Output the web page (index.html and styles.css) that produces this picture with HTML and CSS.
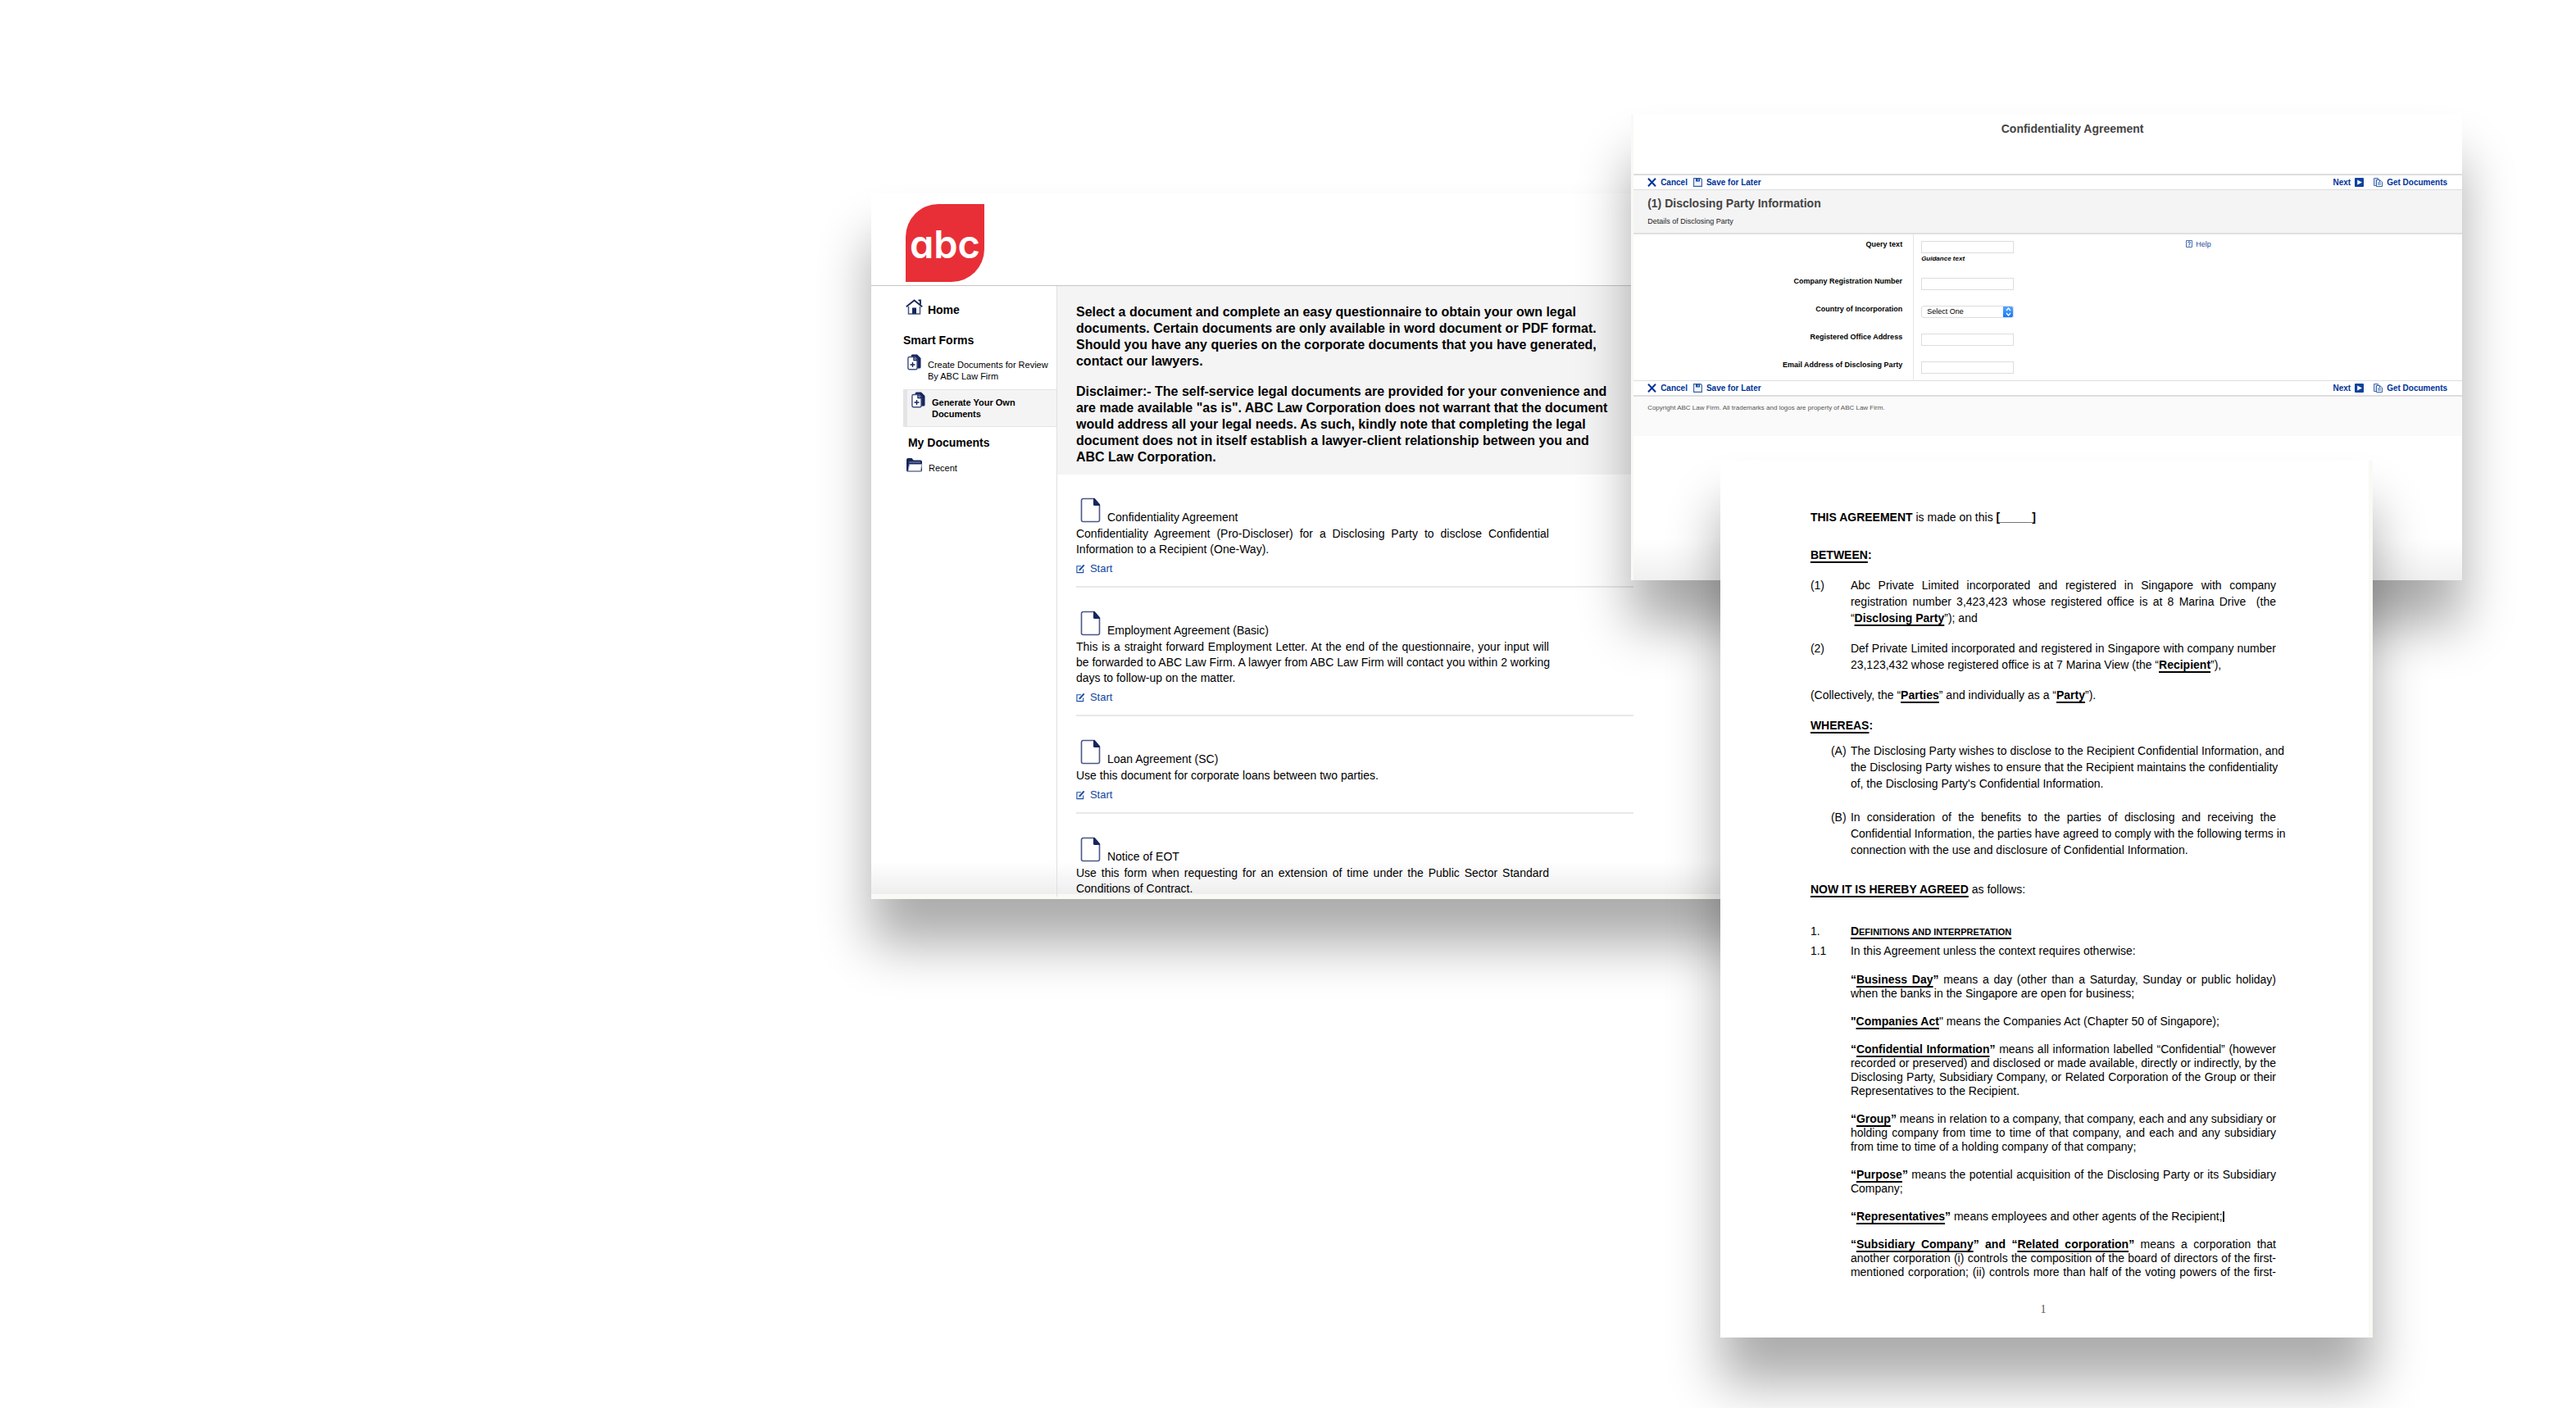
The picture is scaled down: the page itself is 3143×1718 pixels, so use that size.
FILE: index.html
```html
<!DOCTYPE html>
<html lang="en">
<head>
<meta charset="utf-8">
<title>ABC Law Firm Smart Forms</title>
<link rel="stylesheet" href="styles.css">
</head>
<body>
<svg class="defs" aria-hidden="true">
  <symbol id="i-page" viewBox="0 0 25 31"><path d="M17 1.500H3.500a2 2 0 0 0-2 2v24a2 2 0 0 0 2 2h18a2 2 0 0 0 2-2V9z" fill="#fff" stroke="#4a5688" stroke-width="1.600"/><path d="M16 1v7.500q0 1.500 1.500 1.500H24V8.500L17.500 1z" fill="#17265c"/></symbol>
  <symbol id="i-edit" viewBox="0 0 12 12"><path d="M6.500 2.500H1v8.500h8.500V6.500" fill="none" stroke="#1d4fa3" stroke-width="1.200"/><path d="M3.500 8.800 4 6.500 9.800.2l1.600 1.400-5.700 6.500z" fill="#1d4fa3"/></symbol>
  <symbol id="i-docs" viewBox="0 0 17 20"><path d="M6 .5h6L16.500 5v11q0 1.500-1.500 1.500h-3V6L9 3H4.500Q4.500.5 6 .5z" fill="#17265c"/><path d="M2.500 3.500h5.800L12 7.200V17q0 1.800-1.800 1.800H2.700Q.9 18.800.9 17V5.200q0-1.700 1.600-1.700z" fill="#fff" stroke="#3f4c80" stroke-width="1.400"/><path d="M8 3.500v4h4M6.500 10v6M3.500 13h6" fill="none" stroke="#17265c" stroke-width="1.400"/></symbol>
  <symbol id="i-x" viewBox="0 0 11 11"><path d="M1 .8 10 10.200M10 .8 1 10.200" stroke="#039" stroke-width="2"/></symbol>
  <symbol id="i-save" viewBox="0 0 11 11"><path d="M.6 .6h8.400l1.400 1.400v8.400H.6z" fill="#eef3fb" stroke="#3560a8" stroke-width="1.100"/><path d="M3 .8h5v3.700H3z" fill="#1d4a9c"/><path d="M5.500 1.500h1v2h-1z" fill="#fff"/></symbol>
  <symbol id="i-next" viewBox="0 0 11 11"><rect width="11" height="11" rx="1" fill="#0f429c"/><path d="M3.200 2.500 9 5.500 3.200 8.500z" fill="#fff"/></symbol>
  <symbol id="i-copy" viewBox="0 0 11 11"><path d="M.5.5h5v9h-5z" fill="#cfdaee" stroke="#4a70b2"/><path d="M3.500 2.500h4l3 2.500v5.500h-7z" fill="#fff" stroke="#3560a8"/><path d="M5 6h4M5 8h4M7.500 2.500V5" stroke="#3560a8"/></symbol>
  <symbol id="i-help" viewBox="0 0 8 9"><path d="M.5.500h7v8h-7z" fill="#fff" stroke="#4a70b2"/><path d="M2.500 3.300q0-1.300 1.500-1.300t1.500 1.200Q5.500 4 4 4.800v1M4 6.500v1" fill="none" stroke="#1d4a9c"/></symbol>
</svg>

<main class="stage">

  <section class="window portal">
    <header class="portal-head">
      <div class="logo">abc</div>
    </header>
    <div class="portal-body">
      <nav class="side">
        <a class="home" href="#home">
          <svg width="21" height="19" viewBox="0 0 21 19"><path d="M3.500 9v9h14V9" fill="#fff" stroke="#4a5688" stroke-width="1.500"/><path d="M.8 9.300 10.500 1.500 20.200 9.300M15.500 1.500h2.500v5" fill="none" stroke="#17265c" stroke-width="1.800"/><path d="M8 10.500h5V18H8z" fill="#17265c"/></svg>
          Home</a>
        <h2 class="side-title">Smart Forms</h2>
        <a class="side-link" href="#create"><svg width="17" height="20"><use href="#i-docs"/></svg><span>Create Documents for Review<br>By ABC Law Firm</span></a>
        <a class="side-link current" href="#generate" aria-current="page"><svg width="17" height="20"><use href="#i-docs"/></svg><span>Generate Your Own<br>Documents</span></a>
        <h2 class="side-title inset">My Documents</h2>
        <a class="side-link recent" href="#recent">
          <svg width="20" height="17" viewBox="0 0 20 17"><path d="M0 15V2Q0 0 2 0h4.500l2 2.500H17q2 0 2 2V15q0 1.500-2 1.500H2Q0 16.500 0 15z" fill="#17265c"/><path d="M3.500 7.500h15.200L17.500 15.500H2z" fill="#fff" stroke="#8f98b8"/><path d="M3 5h14" stroke="#8f98b8"/></svg>
          <span>Recent</span></a>
      </nav>
      <div class="content">
        <div class="notice">
          <p>Select a document and complete an easy questionnaire to obtain your own legal documents. Certain documents are only available in word document or PDF format. Should you have any queries on the corporate documents that you have generated, contact our lawyers.</p>
          <p>Disclaimer:- The self-service legal documents are provided for your convenience and are made available "as is". ABC Law Corporation does not warrant that the document would address all your legal needs. As such, kindly note that completing the legal document does not in itself establish a lawyer-client relationship between you and ABC Law Corporation.</p>
        </div>
        <article class="item">
          <h3><svg width="25" height="31"><use href="#i-page"/></svg>Confidentiality Agreement</h3>
          <p>Confidentiality Agreement (Pro-Discloser) for a Disclosing Party to disclose Confidential Information to a Recipient (One-Way).</p>
          <a href="#start-ca"><svg width="11" height="12"><use href="#i-edit"/></svg>Start</a>
        </article>
        <article class="item">
          <h3><svg width="25" height="31"><use href="#i-page"/></svg>Employment Agreement (Basic)</h3>
          <p><span class="line">This is a straight forward Employment Letter. At the end of the questionnaire, your input will</span> <span class="line">be forwarded to ABC Law Firm. A lawyer from ABC Law Firm will contact you within 2 working</span> days to follow-up on the matter.</p>
          <a href="#start-ea"><svg width="11" height="12"><use href="#i-edit"/></svg>Start</a>
        </article>
        <article class="item">
          <h3><svg width="25" height="31"><use href="#i-page"/></svg>Loan Agreement (SC)</h3>
          <p>Use this document for corporate loans between two parties.</p>
          <a href="#start-la"><svg width="11" height="12"><use href="#i-edit"/></svg>Start</a>
        </article>
        <article class="item last">
          <h3><svg width="25" height="31"><use href="#i-page"/></svg>Notice of EOT</h3>
          <p>Use this form when requesting for an extension of time under the Public Sector Standard Conditions of Contract.</p>
        </article>
      </div>
    </div>
  </section>

  <section class="window form-window">
    <h1 class="form-name">Confidentiality Agreement</h1>
    <div class="bar bar-top">
      <button type="button"><svg width="11" height="11"><use href="#i-x"/></svg>Cancel</button>
      <button type="button"><svg width="11" height="11"><use href="#i-save"/></svg>Save for Later</button>
      <button type="button" class="next">Next<svg width="11" height="11"><use href="#i-next"/></svg></button>
      <button type="button"><svg width="11" height="11"><use href="#i-copy"/></svg>Get Documents</button>
    </div>
    <div class="form-head">
      <h2>(1) Disclosing Party Information</h2>
      <p>Details of Disclosing Party</p>
    </div>
    <form class="fields">
      <div class="field"><label for="query">Query text</label><div class="entry"><input id="query" type="text"><em>Guidance text</em></div><a class="help" href="#help"><svg width="8" height="9"><use href="#i-help"/></svg>Help</a></div>
      <div class="field"><label for="regno">Company Registration Number</label><div class="entry"><input id="regno" type="text"></div></div>
      <div class="field"><label for="country">Country of Incorporation</label><div class="entry"><select id="country"><option>Select One</option></select></div></div>
      <div class="field"><label for="office">Registered Office Address</label><div class="entry"><input id="office" type="text"></div></div>
      <div class="field"><label for="email">Email Address of Disclosing Party</label><div class="entry"><input id="email" type="text"></div></div>
    </form>
    <div class="bar bar-bottom">
      <button type="button"><svg width="11" height="11"><use href="#i-x"/></svg>Cancel</button>
      <button type="button"><svg width="11" height="11"><use href="#i-save"/></svg>Save for Later</button>
      <button type="button" class="next">Next<svg width="11" height="11"><use href="#i-next"/></svg></button>
      <button type="button"><svg width="11" height="11"><use href="#i-copy"/></svg>Get Documents</button>
    </div>
    <footer class="form-foot">Copyright ABC Law Firm. All trademarks and logos are property of ABC Law Firm.</footer>
  </section>

  <article class="window paper">
    <p><b>THIS AGREEMENT</b> is made on this <b>[_____]</b></p>
    <p class="between"><b><u>BETWEEN</u>:</b></p>
    <div class="clause"><span>(1)</span><p>Abc Private Limited incorporated and registered in Singapore with company registration number 3,423,423 whose registered office is at 8 Marina Drive&nbsp; (the “<b><u>Disclosing Party</u></b>”); and</p></div>
    <div class="clause"><span>(2)</span><p>Def Private Limited incorporated and registered in Singapore with company number 23,123,432 whose registered office is at 7 Marina View (the “<b><u>Recipient</u></b>”),</p></div>
    <p class="para">(Collectively, the “<b><u>Parties</u></b>” and individually as a “<b><u>Party</u></b>”).</p>
    <p class="para"><b><u>WHEREAS</u>:</b></p>
    <div class="clause recital"><span>(A)</span><p><span class="line">The Disclosing Party wishes to disclose to the Recipient Confidential Information, and</span> <span class="line">the Disclosing Party wishes to ensure that the Recipient maintains the confidentiality</span> of, the Disclosing Party's Confidential Information.</p></div>
    <div class="clause recital"><span>(B)</span><p><span class="line">In consideration of the benefits to the parties of disclosing and receiving the</span> <span class="line">Confidential Information, the parties have agreed to comply with the following terms in</span> connection with the use and disclosure of Confidential Information.</p></div>
    <p class="agreed"><b><u>NOW IT IS HEREBY AGREED</u></b> as follows:</p>
    <div class="clause section"><span>1.</span><p><b><u>D<small>efinitions and interpretation</small></u></b></p></div>
    <div class="clause subsection"><span>1.1</span><p>In this Agreement unless the context requires otherwise:</p></div>
    <div class="definitions">
      <p><b>“<u>Business Day</u>”</b> means a day (other than a Saturday, Sunday or public holiday) when the banks in the Singapore are open for business;</p>
      <p><b>"<u>Companies Act</u></b>" means the Companies Act (Chapter 50 of Singapore);</p>
      <p><b>“<u>Confidential Information</u>”</b> means all information labelled “Confidential” (however recorded or preserved) and disclosed or made available, directly or indirectly, by the Disclosing Party, Subsidiary Company, or Related Corporation of the Group or their Representatives to the Recipient.</p>
      <p><span class="line"><b>“<u>Group</u>”</b> means in relation to a company, that company, each and any subsidiary or</span> <span class="line">holding company from time to time of that company, and each and any subsidiary</span> from time to time of a holding company of that company;</p>
      <p><b>“<u>Purpose</u>”</b> means the potential acquisition of the Disclosing Party or its Subsidiary Company;</p>
      <p><b>“<u>Representatives</u>”</b> means employees and other agents of the Recipient;<span class="caret"></span></p>
      <p class="continued"><b>“<u>Subsidiary Company</u>” and “<u>Related corporation</u>”</b> means a corporation that another corporation (<span class="typo">i</span>) controls the composition of the board of directors of the first-mentioned corporation; (ii) controls more than half of the voting powers of the first-</p>
    </div>
    <footer class="folio">1</footer>
  </article>

</main>
</body>
</html>
```
FILE: styles.css
```css
* { box-sizing: border-box; margin: 0; padding: 0; }

body {
  background: #fff;
  color: #000;
  font: 14px/20px "Liberation Sans", Arial, Helvetica, sans-serif;
}

a { color: inherit; text-decoration: none; }
svg { flex: none; display: block; }
.defs { position: absolute; width: 0; height: 0; }

.stage { position: relative; min-height: 100vh; overflow: hidden; }

.window {
  position: absolute;
  background: #fff;
  box-shadow: 0 55px 60px rgba(0, 0, 0, .33);
}

/* a full justified line that is kept together */
.line { display: block; text-align-last: justify; white-space: nowrap; }

/* document portal */
.portal {
  top: 236px;
  left: 33.82%;
  width: 42.5%;
  border-bottom: 6px solid #f9f9f5;
  background: linear-gradient(to top, #eee, #fff 40px);
}

.portal-head {
  height: 113px;
  padding: 13px 42px 0;
  border-bottom: 1px solid #c4c4c4;
}

.logo {
  width: 96px;
  height: 95px;
  border-radius: 40px 0 40px 0;
  background: #e82f37;
  color: #fff;
  font: 600 47px/97px Inter, sans-serif;
  font-feature-settings: "cv11";
  text-align: center;
}

.portal-body { display: flex; margin-bottom: -3px; }

.side {
  flex: none;
  width: 227px;
  padding: 17px 0 0 39px;
  border-right: 1px solid #e0e0e0;
}

.home {
  display: flex;
  gap: 6px;
  padding-left: 3px;
  font-weight: bold;
  line-height: 24px;
}
.home svg { margin-top: -1px; }

.side-title { margin-top: 15px; font-size: 14px; line-height: 20px; }
.side-title.inset { margin-top: 9px; padding-left: 6px; }

.side-link {
  display: flex;
  gap: 8px;
  margin-top: 7px;
  padding-left: 5px;
  font-size: 11px;
  line-height: 14px;
  white-space: nowrap;
}
.side-link span { padding-top: 6px; }

.side-link.current {
  height: 46px;
  margin-top: 9px;
  padding-top: 2px;
  border: solid #e4e4e4;
  border-width: 1px 0 1px 5px;
  background: #f4f4f4;
  font-weight: bold;
}

.side-link.recent { gap: 7px; margin-top: 9px; padding-left: 4px; }
.side-link.recent span { padding-top: 5px; }

.content { flex: 1; }

.notice {
  height: 230px;
  padding: 22px 24px 0 23px;
  background: #f4f4f4;
  font-size: 16px;
  font-weight: bold;
}
.notice p { max-width: 664px; }
.notice p + p { margin-top: 17px; }

.item {
  width: 680px;
  margin-left: 23px;
  padding: 28px 0 12px;
  border-bottom: 2px solid #e8e8e8;
  line-height: 19px;
}
.item h3 {
  display: flex;
  align-items: flex-end;
  gap: 8px;
  height: 31px;
  padding-left: 5px;
  font-size: 14px;
  font-weight: normal;
  line-height: 14px;
}
.item p { width: 577px; margin-top: 4px; text-align: justify; }
.item a {
  display: flex;
  align-items: center;
  gap: 6px;
  margin-top: 4px;
  color: #1146a0;
  font-size: 13px;
}
.item.last { padding-bottom: 0; border: 0; }

/* questionnaire */
.form-window {
  top: 139px;
  left: 63.32%;
  width: 32.26%;
  padding-bottom: 176px;
  border-left: 3px solid #f9f9f5;
  background: linear-gradient(to top, #f0f0f0, #fff 50px);
}

.form-name {
  height: 73px;
  padding: 8px 0 0 60px;
  color: #444;
  font-size: 14px;
  text-align: center;
}

.bar {
  display: flex;
  gap: 7px;
  padding: 0 18px 0 17px;
  border: solid #ddd;
  background: #fff;
}
.bar-top { border-width: 2px 0 1px; }
.bar-bottom { border-width: 1px 0 2px; }

.bar button {
  display: flex;
  align-items: center;
  gap: 5px;
  border: 0;
  background: none;
  color: #039;
  font: bold 10px/17px "Liberation Sans", Arial, sans-serif;
}
.bar .next { margin-left: auto; margin-right: 5px; }

.form-head {
  height: 54px;
  padding: 6px 17px 0;
  border-bottom: 2px solid #e0e0e0;
  background: #f4f4f4;
}
.form-head h2 { color: #444; font-size: 14px; line-height: 20px; }
.form-head p { margin-top: 6px; color: #222; font-size: 9px; line-height: 12px; }

.fields { height: 178px; font-size: 9px; line-height: 11px; }

.field {
  display: grid;
  grid-template-columns: 342px 332px 1fr;
}
.field label {
  padding: 7px 13px 0 0;
  border-right: 1px solid #e6e6e6;
  font-weight: bold;
  text-align: right;
}
.entry { padding: 8px 0 11px 9px; }

.entry input,
.entry select {
  display: block;
  width: 113px;
  height: 15px;
  border: 1px solid #ddd;
  background: #fff;
  font: 9px/11px "Liberation Sans", Arial, sans-serif;
}
.entry select {
  appearance: none;
  padding-left: 6px;
  border-radius: 3px;
  background:
    url("data:image/svg+xml,%3Csvg xmlns='http://www.w3.org/2000/svg' viewBox='0 0 13 15'%3E%3Cpath d='M4 6l2.500-3L9 6M4 9l2.500 3L9 9' fill='none' stroke='%23fff' stroke-width='1.300'/%3E%3C/svg%3E") right / 13px 15px no-repeat border-box,
    linear-gradient(#5cabfc, #0e74fb) right / 13px 15px no-repeat border-box,
    #fff;
  color: #000;
}
.entry em {
  display: block;
  margin-bottom: -2px;
  font-size: 8px;
  font-weight: bold;
  line-height: 13px;
}
.field:last-child .entry { padding-bottom: 9px; }

.help {
  display: flex;
  gap: 4px;
  padding-top: 7px;
  color: #1d4a9c;
}

.form-foot {
  height: 48px;
  padding: 8px 17px;
  background: #fafafa;
  color: #555;
  font-size: 8px;
  line-height: 12px;
}

/* agreement */
.paper {
  top: 562px;
  left: 66.78%;
  width: 25.33%;
  padding: 59px 113px 25px 110px;
  border-right: 5px solid #f9f9f5;
}

.paper u {
  text-decoration-thickness: 2px;
  text-underline-offset: 3px;
  text-decoration-skip-ink: none;
}
.paper small { font-size: 11px; text-transform: uppercase; }

.between { margin-top: 26px; }
.para { margin-top: 17px; }
.agreed { margin-top: 28px; }

.clause {
  display: grid;
  grid-template-columns: 49px 1fr;
  margin-top: 17px;
}
.clause p { min-width: 0; text-align: justify; }
.recital { grid-template-columns: 24px minmax(0, 1fr); padding-left: 25px; margin-top: 11px; }
.recital + .recital { margin-top: 21px; }
.section { margin-top: 31px; }
.subsection { margin-top: 3px; }

.definitions { padding-left: 49px; line-height: 17px; }
.definitions p { margin-top: 17px; text-align: justify; }
.definitions .continued { text-align-last: justify; }

.caret {
  display: inline-block;
  width: 2px;
  height: 13px;
  background: #222;
  vertical-align: -2px;
}
.typo { text-decoration: underline wavy #e22 1px; }

.folio {
  margin-top: 28px;
  color: #555;
  font: 14px/18px "Liberation Serif", serif;
  text-align: center;
}
```
